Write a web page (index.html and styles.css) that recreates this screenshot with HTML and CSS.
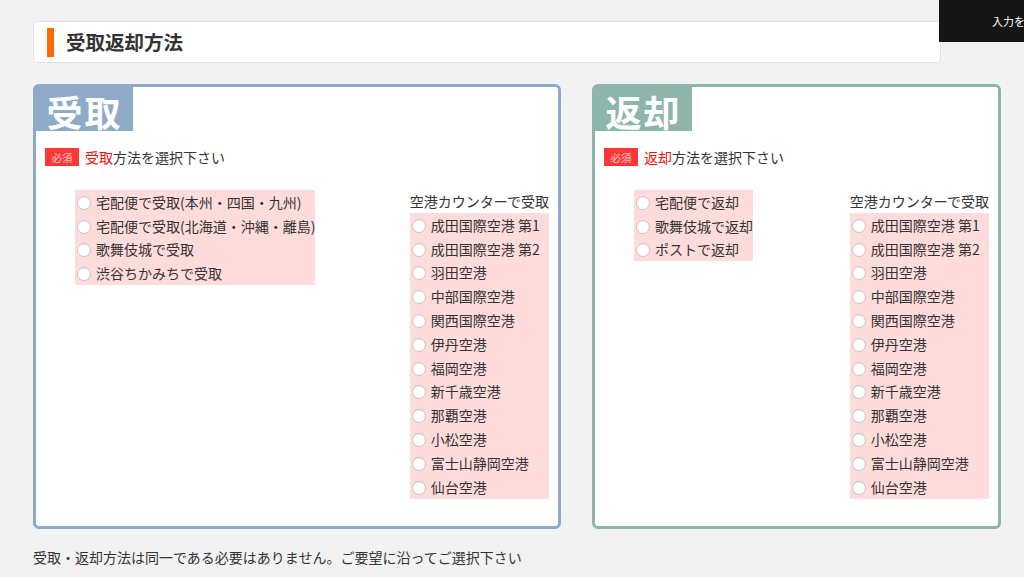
FILE: index.html
```html
<!DOCTYPE html>
<html lang="ja">
<head>
<meta charset="utf-8">
<title>受取返却方法</title>
<link rel="stylesheet" href="styles.css">
</head>
<body>
<div class="topbtn">入力を</div>
<main class="page">
  <header class="head">
    <span class="head-bar"></span>
    <h1 class="head-title">受取返却方法</h1>
  </header>

  <div class="panels">
    <section class="panel panel-recv">
      <div class="tab">受取</div>
      <div class="req"><span class="badge">必須</span><span class="red">受取</span>方法を選択下さい</div>
      <div class="body">
        <ul class="opts">
          <li class="opt"><span class="radio"></span>宅配便で受取(本州・四国・九州)</li>
          <li class="opt"><span class="radio"></span>宅配便で受取(北海道・沖縄・離島)</li>
          <li class="opt"><span class="radio"></span>歌舞伎城で受取</li>
          <li class="opt"><span class="radio"></span>渋谷ちかみちで受取</li>
        </ul>
        <div class="airport">
          <div class="airport-head">空港カウンターで受取</div>
          <ul class="opts">
            <li class="opt"><span class="radio"></span>成田国際空港 第1</li>
            <li class="opt"><span class="radio"></span>成田国際空港 第2</li>
            <li class="opt"><span class="radio"></span>羽田空港</li>
            <li class="opt"><span class="radio"></span>中部国際空港</li>
            <li class="opt"><span class="radio"></span>関西国際空港</li>
            <li class="opt"><span class="radio"></span>伊丹空港</li>
            <li class="opt"><span class="radio"></span>福岡空港</li>
            <li class="opt"><span class="radio"></span>新千歳空港</li>
            <li class="opt"><span class="radio"></span>那覇空港</li>
            <li class="opt"><span class="radio"></span>小松空港</li>
            <li class="opt"><span class="radio"></span>富士山静岡空港</li>
            <li class="opt"><span class="radio"></span>仙台空港</li>
          </ul>
        </div>
      </div>
    </section>

    <section class="panel panel-ret">
      <div class="tab">返却</div>
      <div class="req"><span class="badge">必須</span><span class="red">返却</span>方法を選択下さい</div>
      <div class="body">
        <ul class="opts">
          <li class="opt"><span class="radio"></span>宅配便で返却</li>
          <li class="opt"><span class="radio"></span>歌舞伎城で返却</li>
          <li class="opt"><span class="radio"></span>ポストで返却</li>
        </ul>
        <div class="airport">
          <div class="airport-head">空港カウンターで受取</div>
          <ul class="opts">
            <li class="opt"><span class="radio"></span>成田国際空港 第1</li>
            <li class="opt"><span class="radio"></span>成田国際空港 第2</li>
            <li class="opt"><span class="radio"></span>羽田空港</li>
            <li class="opt"><span class="radio"></span>中部国際空港</li>
            <li class="opt"><span class="radio"></span>関西国際空港</li>
            <li class="opt"><span class="radio"></span>伊丹空港</li>
            <li class="opt"><span class="radio"></span>福岡空港</li>
            <li class="opt"><span class="radio"></span>新千歳空港</li>
            <li class="opt"><span class="radio"></span>那覇空港</li>
            <li class="opt"><span class="radio"></span>小松空港</li>
            <li class="opt"><span class="radio"></span>富士山静岡空港</li>
            <li class="opt"><span class="radio"></span>仙台空港</li>
          </ul>
        </div>
      </div>
    </section>
  </div>

  <p class="note">受取・返却方法は同一である必要はありません。ご要望に沿ってご選択下さい</p>
</main>
</body>
</html>
```

FILE: styles.css
```css
* { box-sizing: border-box; }

html, body {
  margin: 0;
  padding: 0;
  background: #f2f2f2;
  font-family: "Noto Sans CJK JP", "Noto Sans", sans-serif;
  color: #333;
  font-size: 14px;
}

.page {
  padding: 21px 0 0 33px;
}

.topbtn {
  position: absolute;
  top: 0;
  left: 939px;
  right: 0;
  height: 42px;
  background: #151515;
  color: #fff;
  font-size: 11px;
  line-height: 42px;
  padding-left: 53px;
  white-space: nowrap;
  overflow: hidden;
}

.head {
  width: 908px;
  height: 42px;
  background: #fff;
  border: 1px solid #e2e2e2;
  border-radius: 4px;
  display: flex;
  align-items: center;
  padding-left: 13px;
}

.head-bar {
  width: 7px;
  height: 29px;
  background: #ff6a00;
  margin-right: 12px;
}

.head-title {
  margin: 0;
  font-size: 19.5px;
  font-weight: bold;
  color: #333;
  line-height: 1;
}

.panels {
  display: flex;
  gap: 31px;
  margin-top: 21px;
}

.panel {
  height: 445px;
  background: #fff;
  border: 3px solid;
  border-radius: 6px;
}

.panel-recv { width: 528px; border-color: #8eaac8; }
.panel-ret { width: 409px; border-color: #8db5aa; }

.tab {
  width: 97px;
  height: 44px;
  padding-top: 3px;
  color: #fff;
  font-size: 36px;
  font-weight: bold;
  letter-spacing: 2px;
  display: flex;
  align-items: center;
  justify-content: center;
  line-height: 1;
}

.panel-recv .tab { background: #8eaac8; }
.panel-ret .tab { background: #8db5aa; }

.req {
  display: flex;
  align-items: center;
  height: 18px;
  margin: 17px 0 0 9px;
  font-size: 14px;
  color: #333;
}

.badge {
  width: 34px;
  height: 18px;
  background: #ff3636;
  color: #ffd0d0;
  font-size: 10.5px;
  display: flex;
  align-items: center;
  justify-content: center;
  margin-right: 6px;
}

.red { color: #f01010; }

.body {
  display: flex;
  justify-content: space-between;
  align-items: flex-start;
  padding: 0 9px 0 39px;
  margin-top: 24px;
}

.opts {
  list-style: none;
  margin: 0;
  padding: 0;
  background: #ffdcdc;
  width: max-content;
}

.opt {
  display: flex;
  align-items: center;
  height: 23.8px;
  padding-left: 2px;
  white-space: nowrap;
}

.radio {
  width: 14px;
  height: 14px;
  border-radius: 50%;
  background: #fff;
  border: 1px solid #c6c6c6;
  box-shadow: inset 0 1px 1px rgba(0,0,0,0.06);
  margin: 2px 5px 0 0;
  flex: none;
}

.airport-head {
  line-height: 23px;
  white-space: nowrap;
}

.airport .opts { width: 100%; }

.note {
  margin: 18px 0 0;
  font-size: 14px;
  line-height: 20px;
  color: #333;
}
```
